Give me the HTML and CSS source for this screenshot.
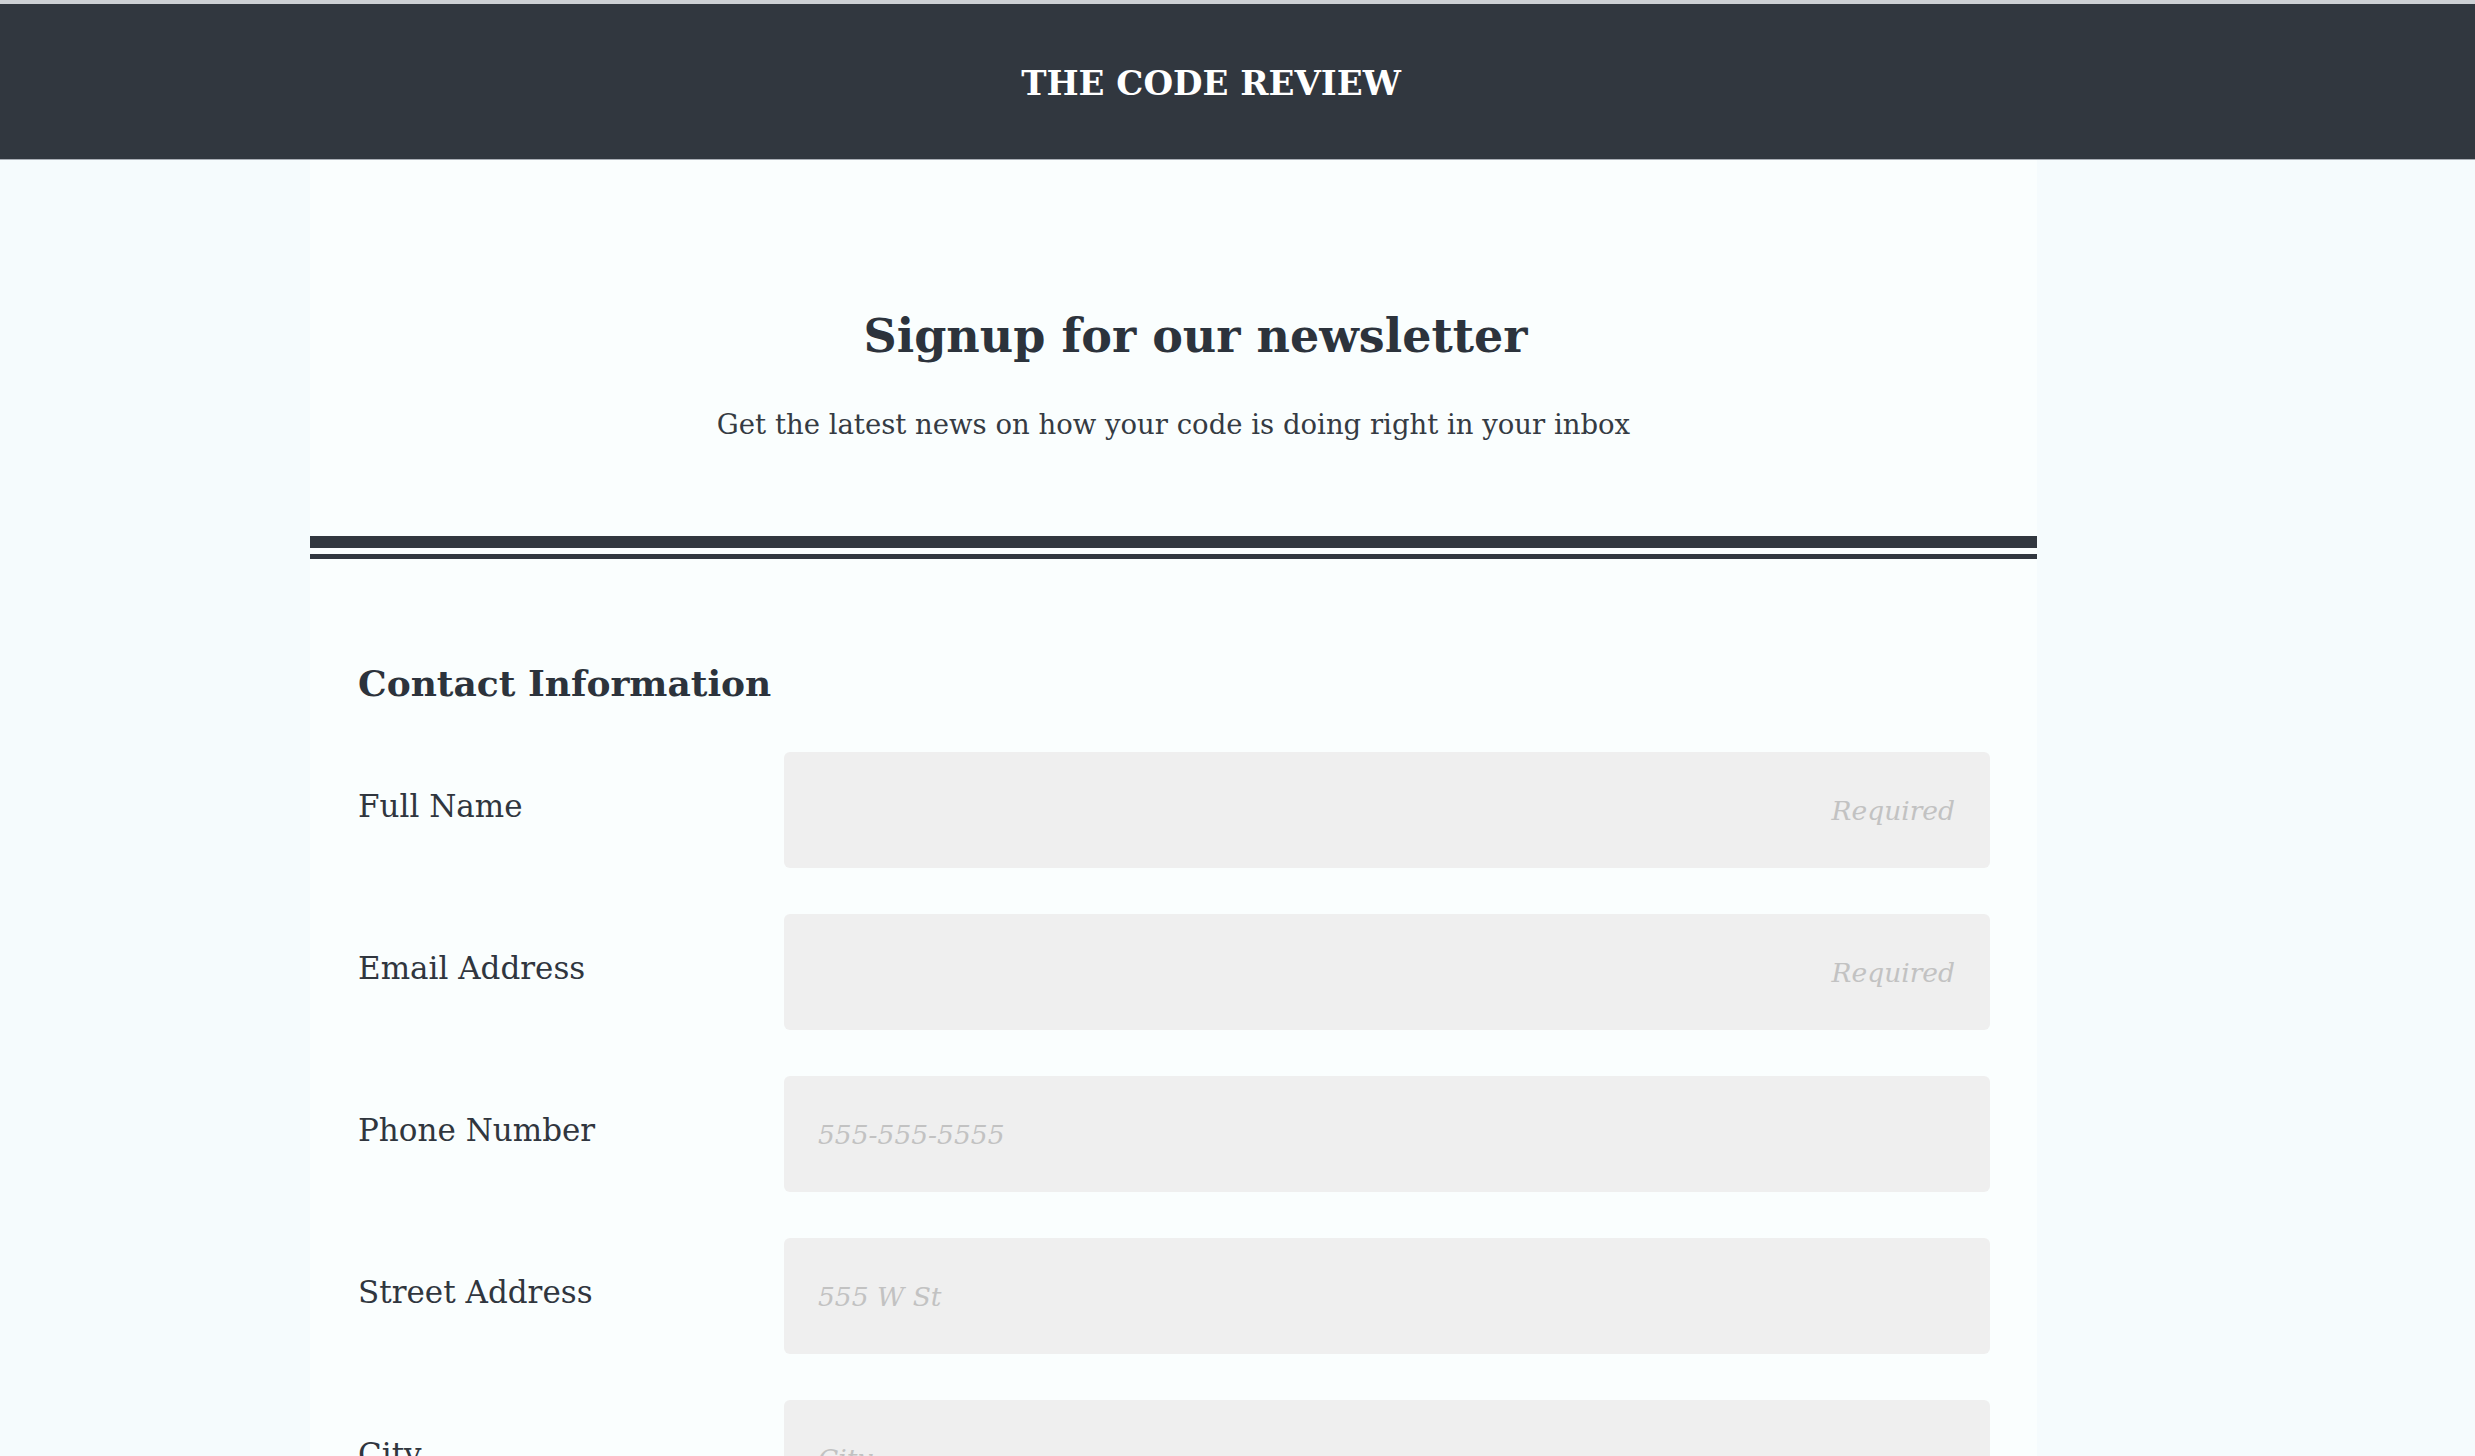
FILE: index.html
```html
<!DOCTYPE html>
<html lang="en">
<head>
<meta charset="utf-8">
<title>The Code Review – Newsletter Signup</title>
<link rel="stylesheet" href="styles.css">
</head>
<body>
<header class="site-header">
  <div class="brand">THE CODE REVIEW</div>
</header>
<main class="page">
  <section class="intro">
    <h1 class="intro-title">Signup for our newsletter</h1>
    <p class="intro-text">Get the latest news on how your code is doing right in your inbox</p>
  </section>
  <div class="double-rule"></div>
  <form class="signup-form">
    <h2 class="section-title">Contact Information</h2>
    <div class="field-list">
      <label class="field">
        <span class="field-label">Full Name</span>
        <input class="field-input is-required" type="text" placeholder="Required">
      </label>
      <label class="field">
        <span class="field-label">Email Address</span>
        <input class="field-input is-required" type="email" placeholder="Required">
      </label>
      <label class="field">
        <span class="field-label">Phone Number</span>
        <input class="field-input" type="tel" placeholder="555-555-5555">
      </label>
      <label class="field">
        <span class="field-label">Street Address</span>
        <input class="field-input" type="text" placeholder="555 W St">
      </label>
      <label class="field">
        <span class="field-label">City</span>
        <input class="field-input" type="text" placeholder="City">
      </label>
      <label class="field">
        <span class="field-label">State</span>
        <input class="field-input" type="text" placeholder="State">
      </label>
    </div>
  </form>
</main>
</body>
</html>
```

FILE: styles.css
```css
html, body {
  margin: 0;
  padding: 0;
  overflow: hidden;
}

body {
  background: #f5fbfd;
  font-family: "DejaVu Serif", "Liberation Serif", serif;
  color: #2f353d;
}

.site-header {
  box-sizing: border-box;
  height: 160px;
  border-top: 4px solid #cdd0d4;
  border-bottom: 1px solid #a9aeb5;
  background: #31373f;
  display: flex;
  align-items: center;
  justify-content: center;
  padding: 3px 53px 0 0;
}

.brand {
  color: #ffffff;
  font-weight: bold;
  font-size: 34px;
  line-height: 44px;
}

.page {
  margin-left: 310px;
  width: 1727px;
  background: #fafefe;
  padding-top: 148px;
  min-height: 1400px;
}

.intro {
  text-align: center;
}

.intro-title {
  margin: 0;
  padding-left: 44px;
  font-size: 46px;
  line-height: 56px;
  font-weight: bold;
  color: #2c333c;
}

.intro-text {
  margin: 40px 0 0;
  font-size: 27.5px;
  line-height: 40px;
  color: #353b43;
}

.double-rule {
  margin-top: 92px;
  height: 6px;
  border-top: 12px solid #31373f;
  border-bottom: 5px solid #31373f;
}

.signup-form {
  padding: 0 47px 0 48px;
}

.section-title {
  margin: 102px 0 47px;
  font-size: 36px;
  line-height: 44px;
  font-weight: bold;
  color: #2c333c;
}

.field-list {
  display: flex;
  flex-direction: column;
  gap: 46px;
}

.field {
  display: flex;
  align-items: center;
}

.field-label {
  width: 426px;
  flex: none;
  font-size: 31px;
  line-height: 40px;
  padding-bottom: 8px;
  color: #30363e;
}

.field-input {
  flex: 1;
  height: 116px;
  box-sizing: border-box;
  border: none;
  border-radius: 6px;
  background: #efefef;
  padding: 0 35px 0 34px;
  font-family: "DejaVu Serif", "Liberation Serif", serif;
  font-size: 26.5px;
  color: #333;
  outline: none;
}

.field-input::placeholder {
  color: #c2c2c2;
  font-style: italic;
}

.field-input.is-required {
  text-align: right;
}
```
